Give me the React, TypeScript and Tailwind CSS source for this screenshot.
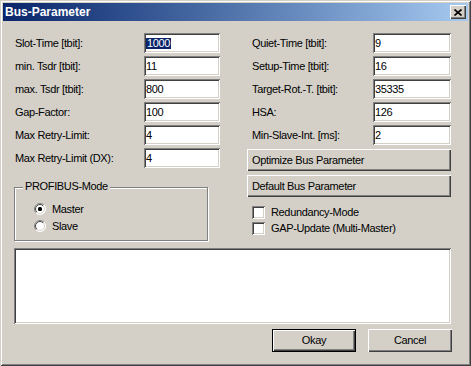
import React from 'react'

const sunken =
  'bg-white shadow-[inset_1px_1px_#808080,inset_-1px_-1px_#ffffff,inset_2px_2px_#404040,inset_-2px_-2px_#d4d0c8]'
const raised =
  'bg-[#d4d0c8] shadow-[inset_1px_1px_#ffffff,inset_-1px_-1px_#404040,inset_-2px_-2px_#808080]'

function EditBox({ value, selected, width }: { value: string; selected?: boolean; width: string }) {
  return (
    <div className={`${sunken} ${width} flex h-5 items-center pl-[2px]`}>
      {selected ? <span className="bg-[#0a246a] px-px text-white">{value}</span> : <span>{value}</span>}
    </div>
  )
}

function Row({ label, value, selected, right }: { label: string; value: string; selected?: boolean; right?: boolean }) {
  return (
    <div className="flex h-5 items-center justify-between">
      <span className={right ? 'pl-[5px]' : 'pl-px'}>{label}</span>
      <EditBox value={value} selected={selected} width={right ? 'w-[78px]' : 'w-[76px]'} />
    </div>
  )
}

function Radio({ checked, id }: { checked?: boolean; id: string }) {
  return (
    <svg width="12" height="12" viewBox="0 0 12 12" className="shrink-0">
      <defs>
        <linearGradient id={`o${id}`} x1="0" y1="0" x2="1" y2="1">
          <stop offset="0.5" stopColor="#808080" />
          <stop offset="0.5" stopColor="#ffffff" />
        </linearGradient>
        <linearGradient id={`i${id}`} x1="0" y1="0" x2="1" y2="1">
          <stop offset="0.5" stopColor="#404040" />
          <stop offset="0.5" stopColor="#d4d0c8" />
        </linearGradient>
      </defs>
      <circle cx="6" cy="6" r="5.5" fill="#ffffff" stroke={`url(#o${id})`} strokeWidth="1" />
      <circle cx="6" cy="6" r="4.5" fill="#ffffff" stroke={`url(#i${id})`} strokeWidth="1" />
      {checked && <rect x="4" y="4" width="4" height="4" rx="1.5" fill="#000000" />}
    </svg>
  )
}

function CheckRow({ label }: { label: string }) {
  return (
    <div className="flex h-[13px] items-center gap-[6px] pl-[5px]">
      <div className={`${sunken} size-[13px] shrink-0`} />
      <span>{label}</span>
    </div>
  )
}

export default function App() {
  return (
    <div className="h-[366px] w-[471px] bg-[#d4d0c8] p-[3px] font-['Liberation_Sans',Arial,sans-serif] text-[11px] leading-none tracking-[-0.35px] text-black shadow-[inset_1px_1px_#d4d0c8,inset_-1px_-1px_#404040,inset_2px_2px_#ffffff,inset_-2px_-2px_#808080]">
      {/* title bar */}
      <div className="flex h-[18px] items-center justify-between bg-gradient-to-r from-[#0a246a] to-[#a6caf0] pl-[2px] pr-[2px]">
        <span className="text-[12px] font-bold tracking-normal text-white">Bus-Parameter</span>
        <div className={`${raised} flex h-[14px] w-4 items-center justify-center`}>
          <svg width="8" height="7" viewBox="0 0 8 7">
            <path d="M0.5 0.5L7.5 6.5M7.5 0.5L0.5 6.5" stroke="#000" strokeWidth="1.6" />
          </svg>
        </div>
      </div>

      <div className="pl-[11px] pt-[12px]">
        <div className="flex h-[208px]">
          {/* left column */}
          <div className="flex w-[206px] flex-col">
            <div className="flex flex-col gap-[3px]">
              <Row label="Slot-Time [tbit]:" value="1000" selected />
              <Row label="min. Tsdr [tbit]:" value="11" />
              <Row label="max. Tsdr [tbit]:" value="800" />
              <Row label="Gap-Factor:" value="100" />
              <Row label="Max Retry-Limit:" value="4" />
              <Row label="Max Retry-Limit (DX):" value="4" />
            </div>
            <div className="relative mt-[19px] h-[54px] w-[194px] border border-[#808080] shadow-[inset_1px_1px_#ffffff,1px_1px_#ffffff]">
              <span className="absolute -top-[7px] left-[8px] bg-[#d4d0c8] px-[2px]">PROFIBUS-Mode</span>
              <div className="flex flex-col gap-[5px] pl-[19px] pt-[15px]">
                <div className="flex h-3 items-center gap-[6px]">
                  <Radio checked id="m" />
                  <span>Master</span>
                </div>
                <div className="flex h-3 items-center gap-[6px]">
                  <Radio id="s" />
                  <span>Slave</span>
                </div>
              </div>
            </div>
          </div>

          {/* right column */}
          <div className="ml-[27px] flex w-[204px] flex-col">
            <div className="flex flex-col gap-[3px]">
              <Row right label="Quiet-Time [tbit]:" value="9" />
              <Row right label="Setup-Time [tbit]:" value="16" />
              <Row right label="Target-Rot.-T. [tbit]:" value="35335" />
              <Row right label="HSA:" value="126" />
              <Row right label="Min-Slave-Int. [ms]:" value="2" />
            </div>
            <div className={`${raised} mt-[4px] flex h-[22px] items-center pl-[5px]`}>Optimize Bus Parameter</div>
            <div className={`${raised} mt-[4px] flex h-[22px] items-center pl-[5px]`}>Default Bus Parameter</div>
            <div className="mt-[9px] flex flex-col gap-[3px]">
              <CheckRow label="Redundancy-Mode" />
              <CheckRow label="GAP-Update (Multi-Master)" />
            </div>
          </div>
        </div>

        <div className={`${sunken} mt-[7px] h-[76px] w-[437px]`} />

        <div className="mt-[5px] flex w-[438px] justify-end gap-[12px]">
          <div className="flex h-[23px] w-[84px] items-center justify-center border border-black bg-[#d4d0c8] shadow-[inset_1px_1px_#ffffff,inset_-1px_-1px_#404040,inset_-2px_-2px_#808080]">
            Okay
          </div>
          <div className={`${raised} flex h-[23px] w-[84px] items-center justify-center`}>Cancel</div>
        </div>
      </div>
    </div>
  )
}
